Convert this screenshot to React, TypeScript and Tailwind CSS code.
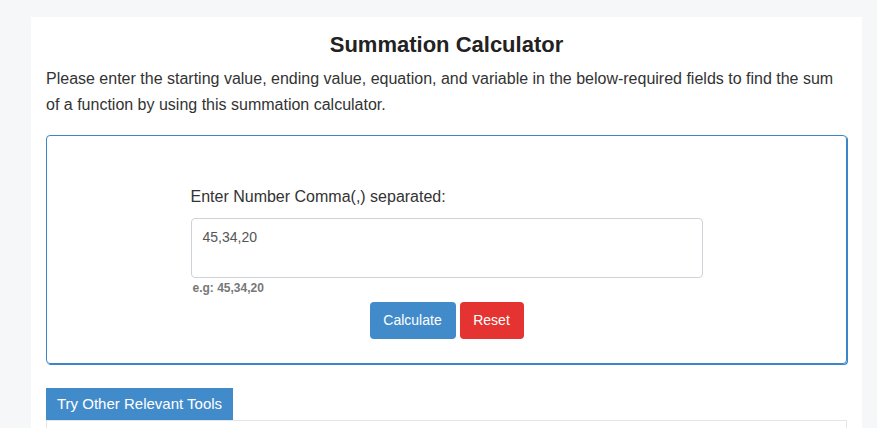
export default function App() {
  return (
    <div className="min-h-screen bg-[#f6f7f9] pl-[31px] pr-[15px] pt-[17px] font-['Liberation_Sans',Arial,sans-serif]">
      <div className="bg-white px-[15px] pt-[14px] pb-[40px]">
        <h1 className="text-center text-[22px] font-bold leading-[28px] text-[#222]">
          Summation Calculator
        </h1>
        <p className="mt-[7px] text-[16px] leading-[26px] text-[#333]">
          Please enter the starting value, ending value, equation, and variable in the below-required fields to find the sum
          of a function by using this summation calculator.
        </p>

        <div className="mt-[17px] h-[229px] rounded-[4px] border border-[#3b86c8] pt-[49px] shadow-[1px_1px_0_#3b86c8]">
          <div className="mx-auto w-[512px]">
            <label className="block text-[16px] leading-[24px] text-[#333]">
              Enter Number Comma(,) separated:
            </label>
            <textarea
              className="mt-[9px] block h-[60px] w-full resize-none rounded-[4px] border border-[#cfd3d8] px-[11px] py-[8px] text-[14px] leading-[20px] text-[#555] outline-none"
              defaultValue="45,34,20"
            />
            <div className="mt-[2px] pl-[2px] text-[12px] font-bold leading-[16px] text-[#777]">
              e.g: 45,34,20
            </div>
            <div className="mt-[6px] flex justify-center gap-[4px]">
              <button className="h-[37px] w-[86px] rounded-[4px] bg-[#428bca] text-[14px] text-white">
                Calculate
              </button>
              <button className="h-[37px] w-[64px] rounded-[4px] bg-[#e43330] text-[14px] text-white">
                Reset
              </button>
            </div>
          </div>
        </div>

        <div className="mt-[24px]">
          <div className="inline-block h-[32px] bg-[#428bca] px-[11px] text-[15px] leading-[32px] text-white">
            Try Other Relevant Tools
          </div>
          <div className="h-[60px] border border-[#e3e5ea]" />
        </div>
      </div>
    </div>
  );
}
